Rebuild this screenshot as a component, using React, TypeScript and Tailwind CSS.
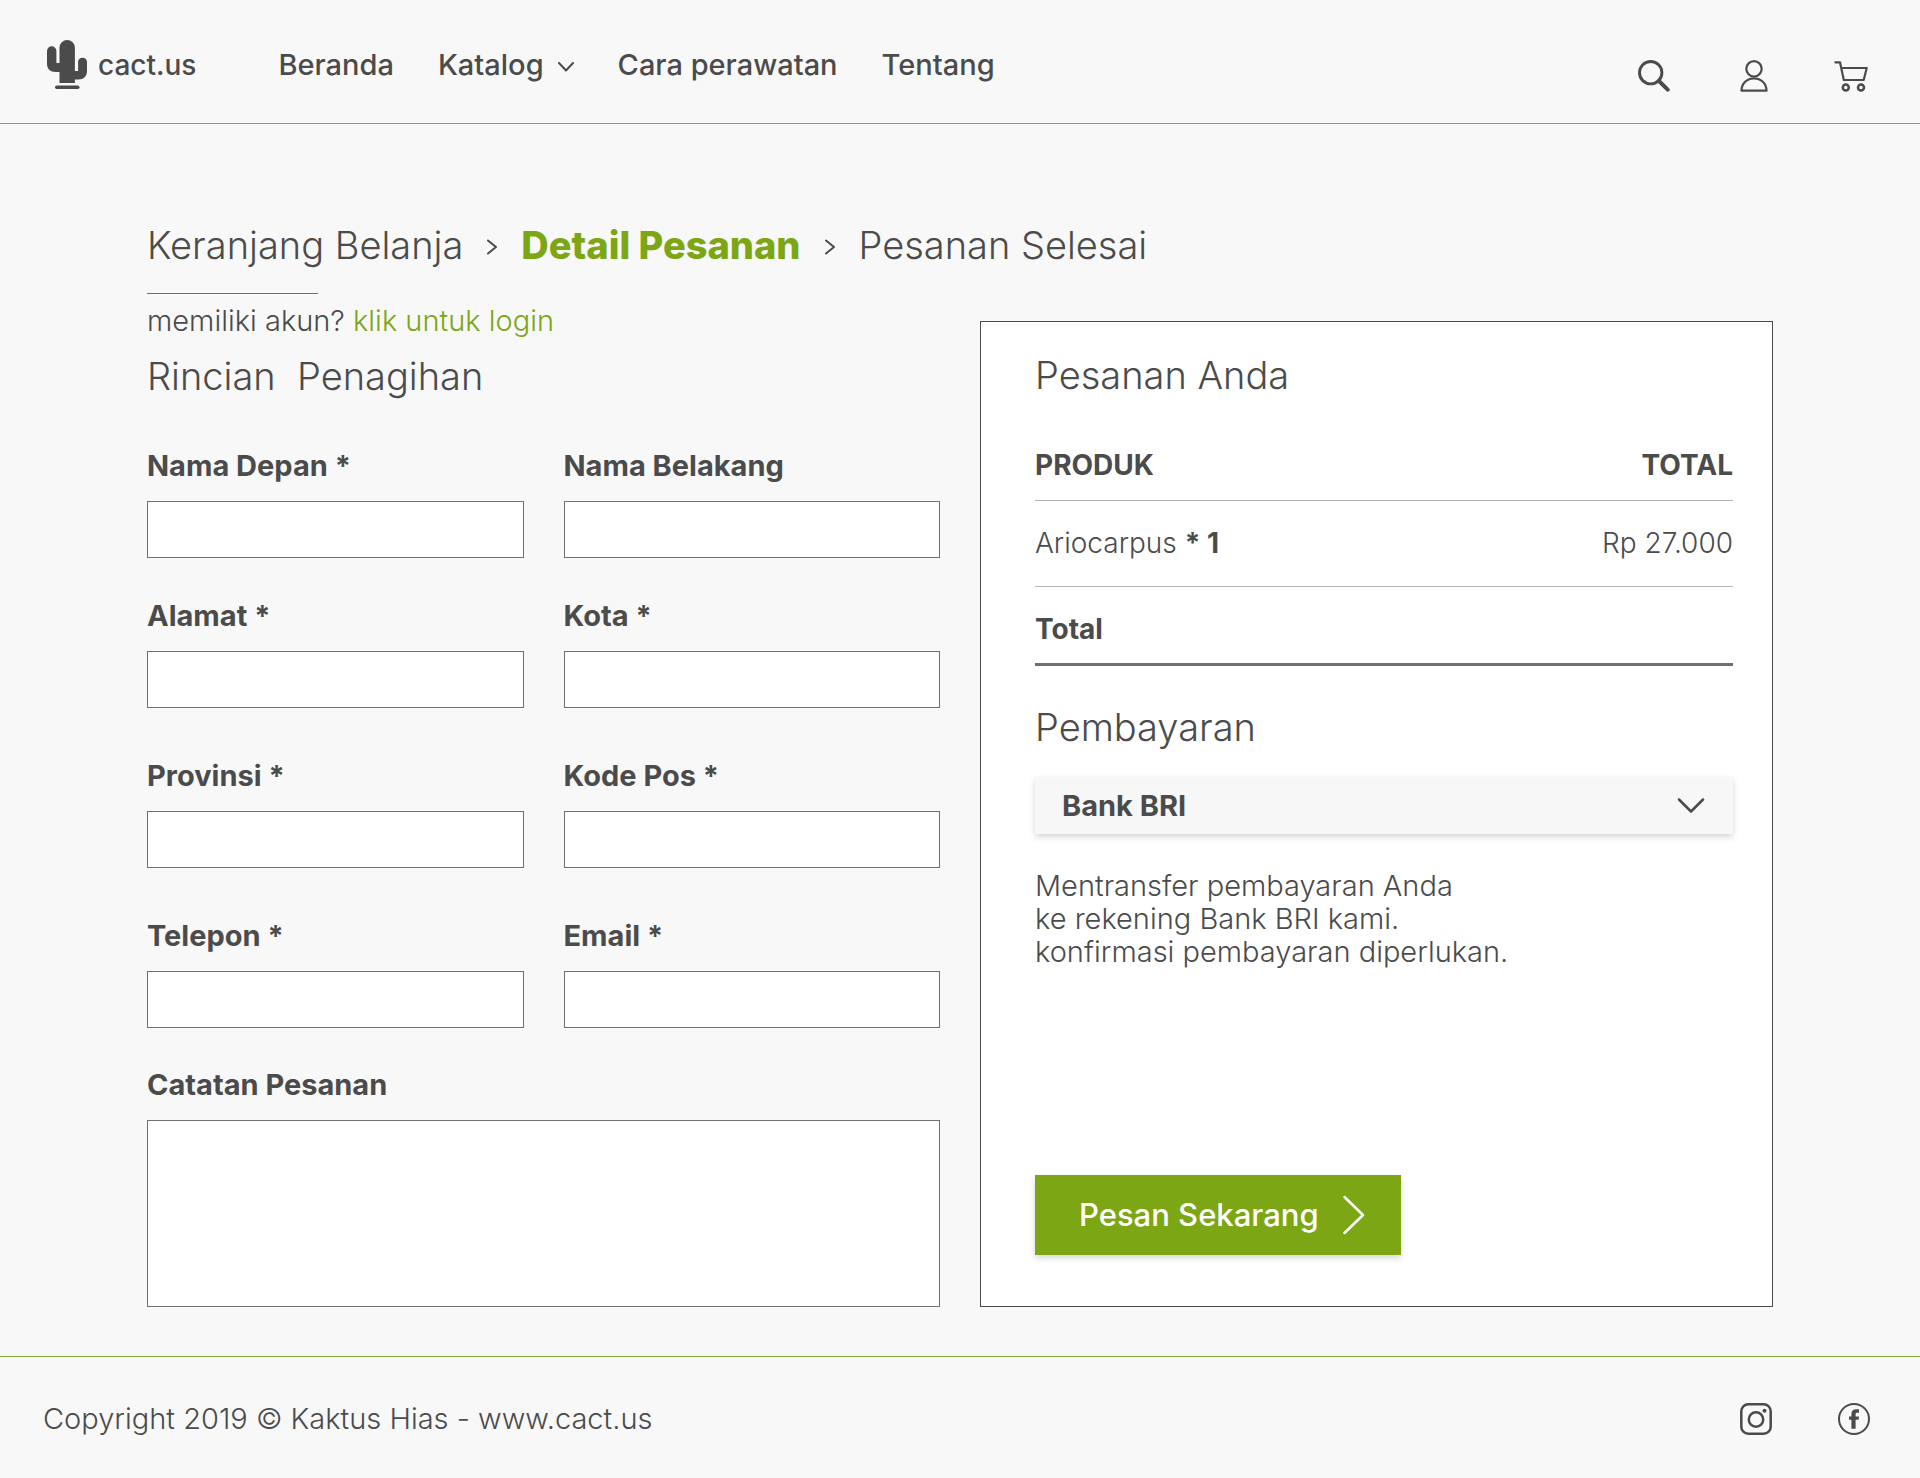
import React from 'react';

const headingClass = 'text-[38px] leading-[48px] font-light';
const labelClass = 'block text-[29px] leading-8 font-bold';
const bodyClass = 'text-[29px] leading-8 font-light';

function CactusLogo() {
  return (
    <svg className="h-[49px] w-10 shrink-0" viewBox="0 0 40 49" fill="currentColor" aria-hidden="true">
      <path d="M12.500 43V32H8.500C3.500 32 0 29 0 24V11a4.700 4.700 0 0 1 9.400 0v12h3.100V7.700a7.700 7.700 0 0 1 15.400 0V31h3.200V21.500a4.500 4.500 0 0 1 8.900 0V31c0 5.500-3.500 8.500-8.500 8.500h-3.600V43Z" />
      <rect x="8" y="45.500" width="24.500" height="3.500" rx="1.700" />
    </svg>
  );
}

function Chevron({ className, d, box, width }: { className: string; d: string; box: string; width: number }) {
  return (
    <svg
      className={className}
      viewBox={box}
      fill="none"
      stroke="currentColor"
      strokeWidth={width}
      strokeLinecap="round"
      strokeLinejoin="round"
      aria-hidden="true"
    >
      <path d={d} />
    </svg>
  );
}

function SearchIcon() {
  return (
    <svg className="size-8" viewBox="0 0 32 32" fill="none" stroke="currentColor" strokeLinecap="round" aria-hidden="true">
      <circle cx="12.700" cy="12.700" r="11.200" strokeWidth="2.900" />
      <path d="M22 22 29.700 29.700" strokeWidth="4" />
      <path d="m20.500 20.500 2 2" strokeWidth="2.900" />
    </svg>
  );
}

function UserIcon() {
  return (
    <svg className="size-8" viewBox="0 0 32 32" fill="none" stroke="currentColor" strokeWidth="2.200" strokeLinejoin="round" aria-hidden="true">
      <circle cx="16" cy="8.800" r="7.700" />
      <path d="M3.500 30.700C3.500 23.500 9 18.300 16 18.300S28.500 23.500 28.500 30.700Z" />
    </svg>
  );
}

function CartIcon() {
  return (
    <svg className="h-8 w-[34px]" viewBox="0 0 34 32" fill="none" stroke="currentColor" strokeLinecap="round" strokeLinejoin="round" aria-hidden="true">
      <path d="M1.300 2.300H6L9.800 20H29.700L32.700 8H7.500" strokeWidth="2.200" />
      <circle cx="11.800" cy="27.500" r="3" strokeWidth="2.500" />
      <circle cx="27" cy="27.500" r="3" strokeWidth="2.500" />
    </svg>
  );
}

function InstagramIcon() {
  return (
    <svg className="size-8" viewBox="0 0 32 32" fill="none" stroke="currentColor" aria-hidden="true">
      <rect x="1.300" y="1.300" width="29.400" height="29.400" rx="7" strokeWidth="2.500" />
      <circle cx="16" cy="16.500" r="7.200" strokeWidth="2.500" />
      <circle cx="24.500" cy="7.800" r="2" fill="currentColor" stroke="none" />
    </svg>
  );
}

function FacebookIcon() {
  return (
    <svg className="size-8" viewBox="0 0 32 32" aria-hidden="true">
      <circle cx="16" cy="16" r="15" fill="none" stroke="currentColor" strokeWidth="2" />
      <path
        fill="currentColor"
        d="M13.400 25.800V16.800h-2.400v-3.200h2.400v-2.200c0-3.400 1.600-5.200 4.800-5.200h2.800v3.600h-1.700c-1.300 0-1.700.5-1.700 1.700v2.100h3.400l-.4 3.200h-3v9Z"
      />
    </svg>
  );
}

function Field({ id, label }: { id: string; label: string }) {
  return (
    <div>
      <label htmlFor={id} className={labelClass}>
        {label}
      </label>
      <input id={id} type="text" className="mt-[19px] block h-[57px] w-full border border-[#707070] bg-white px-4 text-2xl" />
    </div>
  );
}

function StepChevron() {
  return <Chevron className="mt-1 h-4 w-2.5" box="0 0 10 16" d="M1 1.500 9 8 1 14.500" width={2} />;
}

export default function App() {
  return (
    <div className="min-h-screen bg-[#f8f8f8] font-['Inter',sans-serif] text-[#4b4b4b]">
      <header className="flex items-start justify-between border-b border-[#8aa63c] pt-10 pr-[52px] pb-[31px] pl-[47px]">
        <div className="flex items-center gap-[82px]">
          <a href="#" className="flex items-center gap-[11px] text-[28px] leading-8 font-medium">
            <CactusLogo />
            cact.us
          </a>
          <nav className="flex items-center gap-11 text-[29px] leading-8 font-medium">
            <a href="#">Beranda</a>
            <a href="#" className="flex items-center gap-[14px]">
              Katalog
              <Chevron className="mt-1 h-2.5 w-4" box="0 0 16 10" d="M1 1 8 8.500 15 1" width={2} />
            </a>
            <a href="#">Cara perawatan</a>
            <a href="#">Tentang</a>
          </nav>
        </div>
        <div className="flex items-center gap-[68px] pt-5">
          <button type="button" aria-label="Cari">
            <SearchIcon />
          </button>
          <button type="button" aria-label="Akun">
            <UserIcon />
          </button>
          <button type="button" aria-label="Keranjang" className="-ml-1">
            <CartIcon />
          </button>
        </div>
      </header>

      <main className="px-[147px] pt-[97px] pb-[49px]">
        <nav className={`flex items-center gap-6 ${headingClass}`} aria-label="Langkah pesanan">
          <a href="#">Keranjang Belanja</a>
          <StepChevron />
          <span className="font-extrabold text-[#7da615]">Detail Pesanan</span>
          <StepChevron />
          <span>Pesanan Selesai</span>
        </nav>
        <hr className="mt-6 w-[171px] border-t border-[#707070]" />

        <div className="mt-[11px] grid grid-cols-2 gap-10">
          <form>
            <p className={bodyClass}>
              memiliki akun?{' '}
              <a href="#" className="text-[#7da615]">
                klik untuk login
              </a>
            </p>
            <h1 className={`mt-[15px] whitespace-pre ${headingClass}`}>{'Rincian  Penagihan'}</h1>
            <div className="mt-[50px] grid grid-cols-2 gap-x-10 gap-y-[42px]">
              <Field id="nama-depan" label="Nama Depan *" />
              <Field id="nama-belakang" label="Nama Belakang" />
              <Field id="alamat" label="Alamat *" />
              <Field id="kota" label="Kota *" />
            </div>
            <div className="mt-[52px] grid grid-cols-2 gap-x-10 gap-y-[52px]">
              <Field id="provinsi" label="Provinsi *" />
              <Field id="kode-pos" label="Kode Pos *" />
              <Field id="telepon" label="Telepon *" />
              <Field id="email" label="Email *" />
            </div>
            <div className="mt-[41px]">
              <label htmlFor="catatan" className={labelClass}>
                Catatan Pesanan
              </label>
              <textarea id="catatan" className="mt-[19px] block h-[187px] w-full resize-none border border-[#707070] bg-white p-4 text-2xl" />
            </div>
          </form>

          <section className="mt-4 flex flex-col border border-[#4b4b4b] bg-white pt-[29px] pr-[39px] pb-[51px] pl-[54px]">
            <h2 className={headingClass}>Pesanan Anda</h2>
            <table className="mt-[50px] w-full text-left">
              <thead>
                <tr className="border-b border-[#b4b4b4] text-[28px] leading-8">
                  <th scope="col" className="pb-[19px] font-bold">PRODUK</th>
                  <th scope="col" className="pb-[19px] text-right font-bold">TOTAL</th>
                </tr>
              </thead>
              <tbody>
                <tr className="border-b border-[#b4b4b4] text-[28px] leading-8 font-light">
                  <td className="pt-[26px] pb-[27px]">
                    Ariocarpus <b className="font-bold">* 1</b>
                  </td>
                  <td className="pt-[26px] pb-[27px] text-right">Rp 27.000</td>
                </tr>
              </tbody>
              <tfoot>
                <tr className="border-b-3 border-[#707070] text-[28px] leading-8">
                  <th scope="row" className="pt-[26px] pb-[18px] font-bold">Total</th>
                  <td />
                </tr>
              </tfoot>
            </table>
            <h2 className={`mt-[37px] ${headingClass}`}>
              <label htmlFor="pembayaran">Pembayaran</label>
            </h2>
            <div className="relative mt-[26px]">
              <select
                id="pembayaran"
                className="block h-[57px] w-full appearance-none bg-[#f7f7f7] pr-16 pl-[27px] text-[29px] font-bold shadow-[0_3px_6px_rgba(0,0,0,0.16)]"
              >
                <option>Bank BRI</option>
              </select>
              <Chevron
                className="pointer-events-none absolute top-[21px] right-7 h-[15px] w-7"
                box="0 0 28 15"
                d="M2 1.500 14 13.500 26 1.500"
                width={2.5}
              />
            </div>
            <p className="mt-[35px] text-[29px] leading-[33px] font-light">
              Mentransfer pembayaran Anda
              <br />
              ke rekening Bank BRI kami.
              <br />
              konfirmasi pembayaran diperlukan.
            </p>
            <button
              type="button"
              className="mt-auto flex h-20 items-center gap-6 self-start bg-[#7da615] pr-9 pl-11 text-[31px] leading-9 font-medium text-white shadow-[0_3px_6px_rgba(0,0,0,0.16)]"
            >
              Pesan Sekarang
              <Chevron className="h-10 w-[22px]" box="0 0 22 40" d="M1.500 2 20 20 1.500 38" width={2.5} />
            </button>
          </section>
        </div>
      </main>

      <footer className="flex items-center justify-between border-t border-[#8aa63c] pt-[46px] pr-[50px] pb-[43px] pl-[43px]">
        <p className="text-[29px] leading-8 font-light">Copyright 2019 © Kaktus Hias - www.cact.us</p>
        <div className="flex items-center gap-[66px]">
          <a href="#" aria-label="Instagram">
            <InstagramIcon />
          </a>
          <a href="#" aria-label="Facebook">
            <FacebookIcon />
          </a>
        </div>
      </footer>
    </div>
  );
}
